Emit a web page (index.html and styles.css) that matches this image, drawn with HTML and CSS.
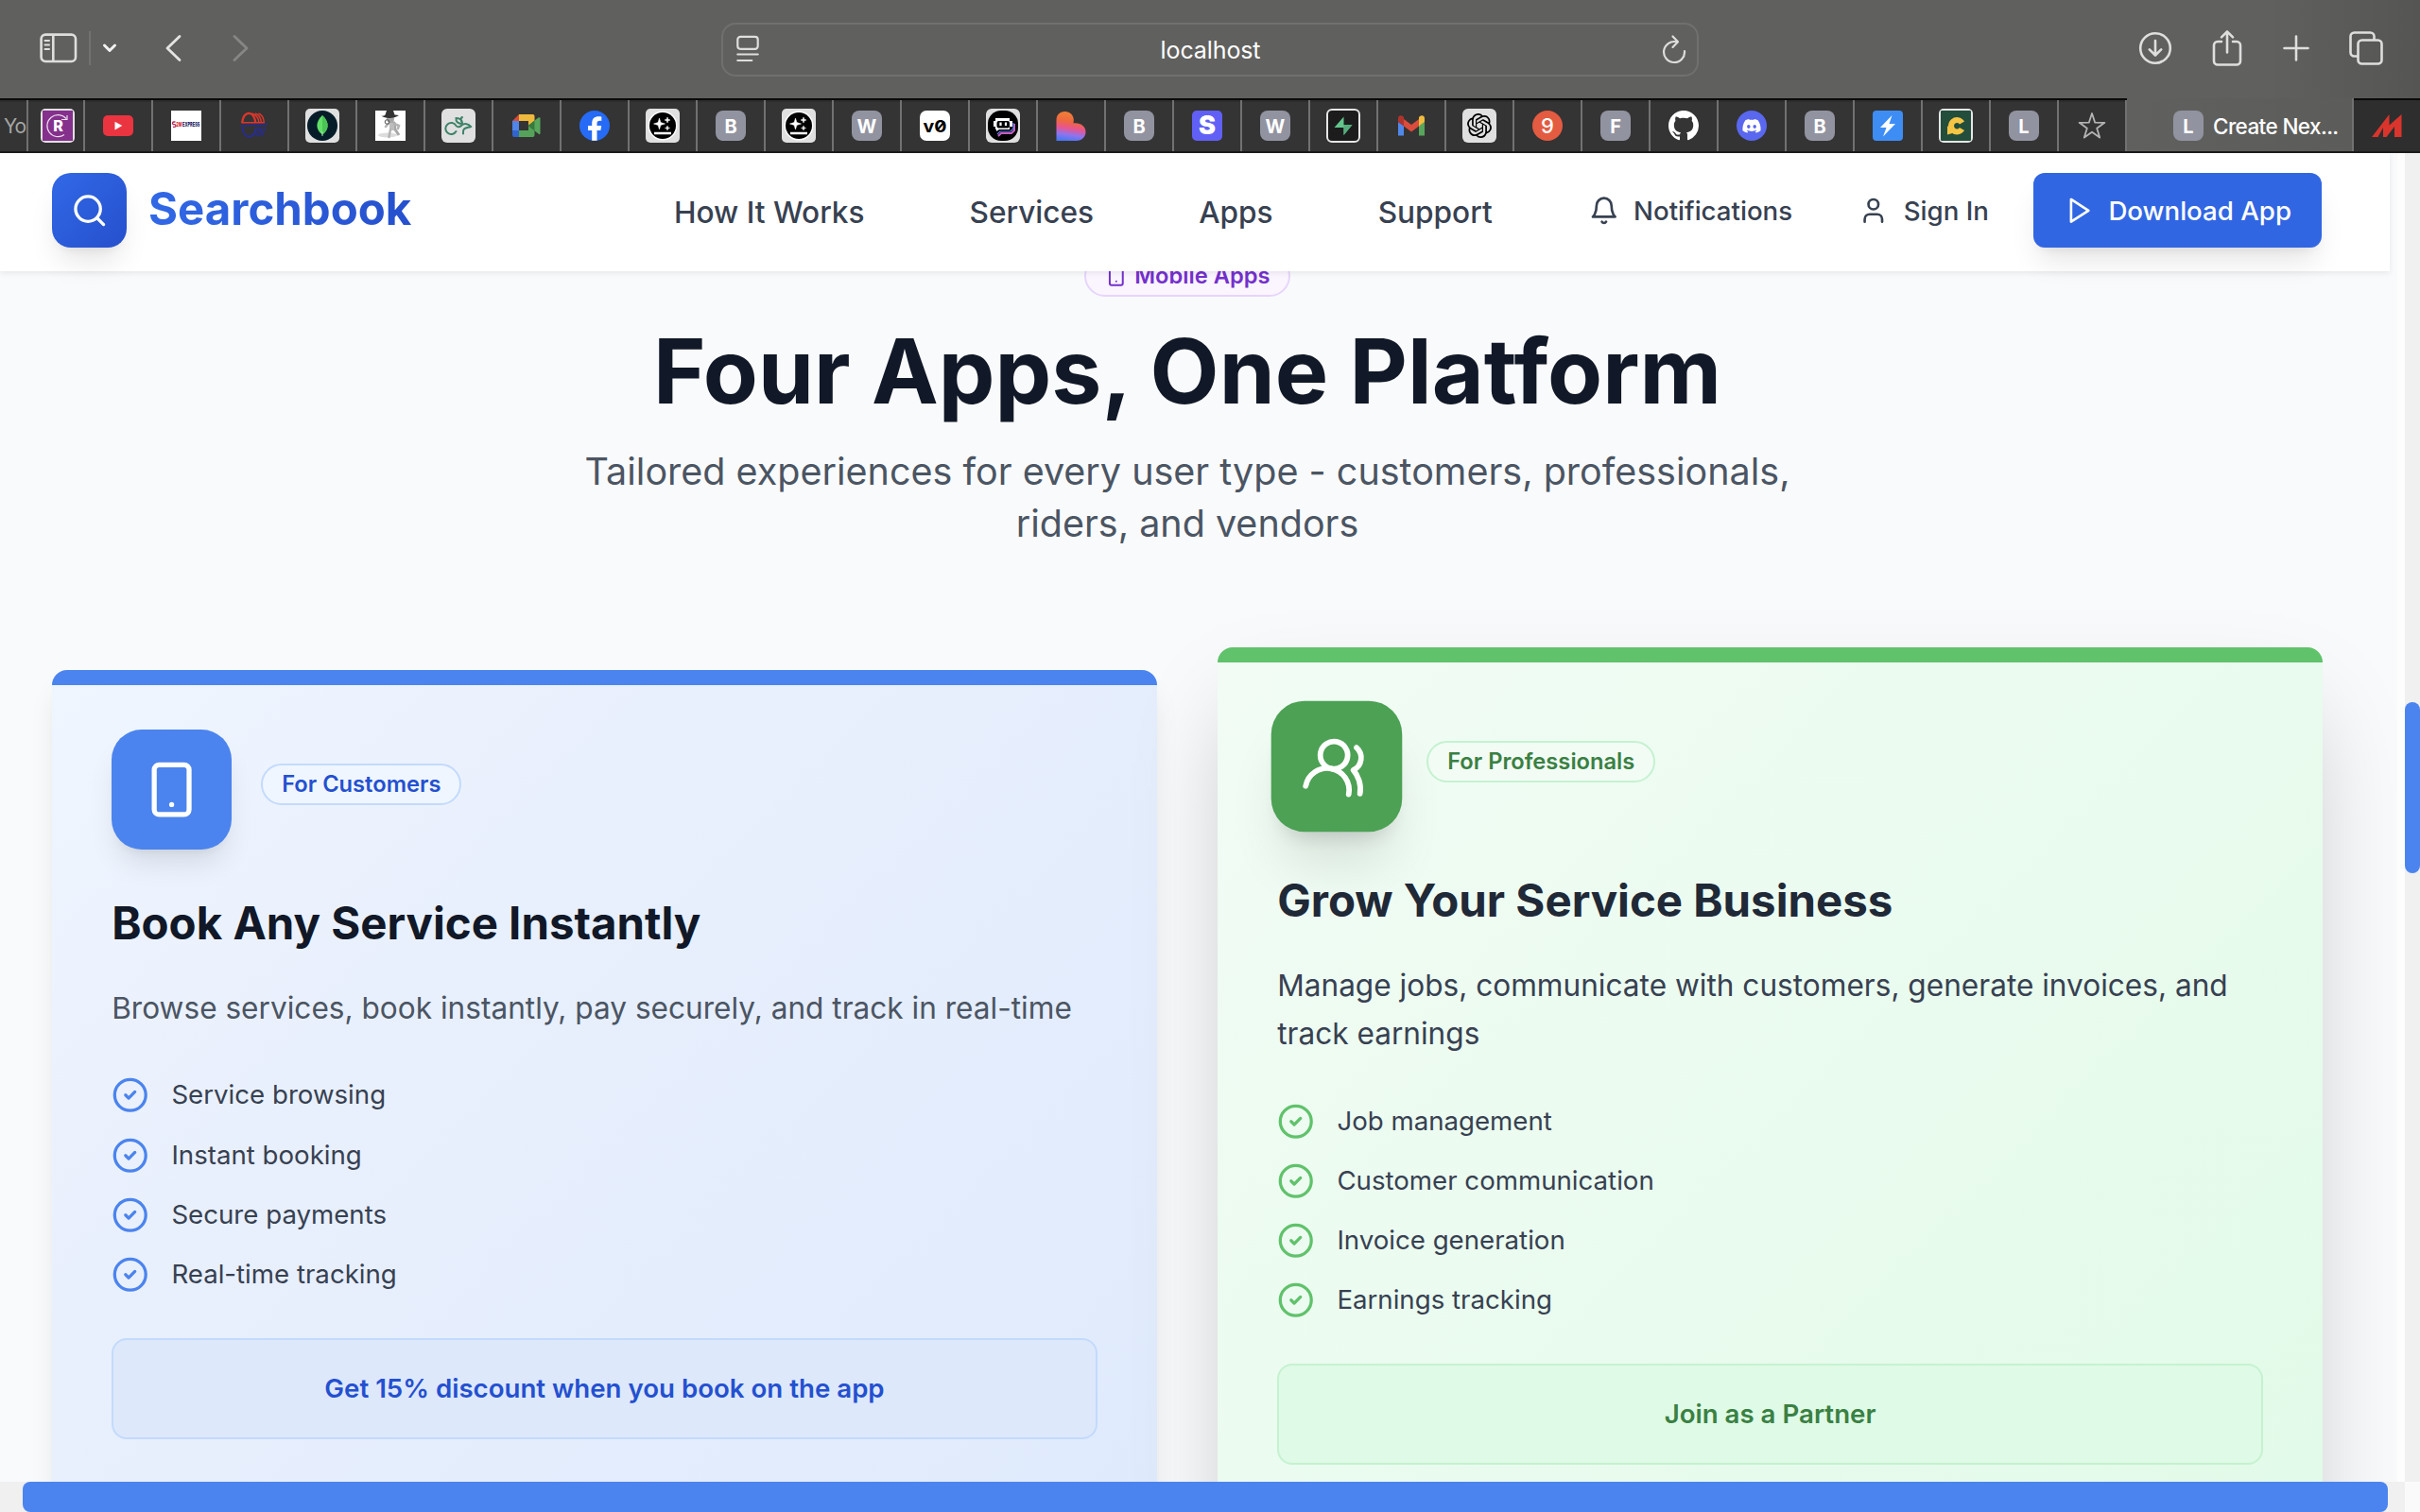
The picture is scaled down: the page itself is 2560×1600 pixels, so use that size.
FILE: index.html
```html
<!DOCTYPE html>
<html lang="en">
<head>
<meta charset="utf-8">
<title>Searchbook</title>
<link rel="stylesheet" href="styles.css">
</head>
<body>
<div class="browser">
  <div class="toolbar">
    <div class="tools tools-left">
      <svg class="i-sidebar" width="40" height="32" viewBox="0 0 40 32" fill="none" stroke="#dededd" stroke-width="2.6"><rect x="1.6" y="1.6" width="36.4" height="28.4" rx="4.5"/><path d="M14.3 2v28"/><path d="M5.5 8h4.5M5.5 12.5h4.5M5.5 17h4.5" stroke-width="2" stroke-linecap="round"/></svg>
      <span class="tool-divider"></span>
      <svg class="i-chev" width="16" height="12" viewBox="0 0 16 12" fill="none" stroke="#f2f2f2" stroke-width="3" stroke-linecap="round" stroke-linejoin="round"><path d="M2.5 3l5.5 5.5L13.500 3"/></svg>
      <svg class="i-back" width="20" height="32" viewBox="0 0 20 32" fill="none" stroke="#e4e4e3" stroke-width="2.8" stroke-linecap="round" stroke-linejoin="round"><path d="M17 3.500L4 16l13 12.500"/></svg>
      <svg class="i-fwd" width="20" height="32" viewBox="0 0 20 32" fill="none" stroke="#868685" stroke-width="2.8" stroke-linecap="round" stroke-linejoin="round"><path d="M3 3.500L16 16 3 28.500"/></svg>
    </div>
    <div class="address">
      <svg width="24" height="30" viewBox="0 0 24 30" fill="none" stroke="#dededd" stroke-width="2.2" stroke-linecap="round"><rect x="1.300" y="1.800" width="21.400" height="13" rx="3"/><path d="M1.300 20.500h21.400M1.300 27h15"/></svg>
      <span class="address-text">localhost</span>
      <svg width="26" height="32" viewBox="0 0 26 32" fill="none" stroke="#dededd" stroke-width="2.200" stroke-linecap="round" stroke-linejoin="round"><path d="M15.500 8.300A11 11 0 1 0 24 18"/><path d="M11.500 2.500l5.500 5.800-5.500 5.600"/></svg>
    </div>
    <div class="tools tools-right">
      <svg width="36" height="36" viewBox="0 0 36 36" fill="none" stroke="#dededd" stroke-width="2.600" stroke-linecap="round" stroke-linejoin="round"><circle cx="18" cy="18" r="15.800"/><path d="M18 10v15M11.800 19.300L18 25.500l6.200-6.200"/></svg>
      <svg width="32" height="40" viewBox="0 0 32 40" fill="none" stroke="#dededd" stroke-width="2.600" stroke-linecap="round" stroke-linejoin="round"><path d="M10 13H6a4 4 0 0 0-4 4v16.500a4 4 0 0 0 4 4h20a4 4 0 0 0 4-4V17a4 4 0 0 0-4-4h-4"/><path d="M16 24.500V2.500M10 8.300l6-6 6 6"/></svg>
      <svg width="28" height="28" viewBox="0 0 28 28" fill="none" stroke="#dededd" stroke-width="2.600" stroke-linecap="round"><path d="M14 1.500v25M1.500 14h25"/></svg>
      <svg width="36" height="36" viewBox="0 0 36 36" fill="none" stroke="#dededd" stroke-width="2.600" stroke-linejoin="round"><rect x="9.500" y="9.500" width="25" height="25" rx="4"/><path d="M9.500 26.500h-4a4 4 0 0 1-4-4v-17a4 4 0 0 1 4-4h17a4 4 0 0 1 4 4v4"/></svg>
    </div>
  </div>

  <div class="tabs">
    <div class="tab tab-clip">Yo</div>
    <div class="tab tab-narrow"><svg class="fav" width="36" height="36" viewBox="0 0 36 36"><rect width="36" height="36" rx="5" fill="#e0e0e0"/><rect x="2" y="2" width="32" height="32" fill="#85308c"/><path d="M25 27.500A11.500 11.500 0 1 1 27 10.500M28 7v4.500h-6" fill="none" stroke="#eadcec" stroke-width="1.200"/><text x="18.500" y="23.500" text-anchor="middle" class="t-r">R</text></svg></div>
    <div class="tab"><svg class="fav" width="32" height="32" viewBox="0 0 32 32"><rect y="5" width="32" height="22" rx="5" fill="#ea3440"/><path d="M12.500 11.800v8.600l7.800-4.300z" fill="#fff"/></svg></div>
    <div class="tab"><svg class="fav" width="32" height="32" viewBox="0 0 32 32"><rect width="32" height="32" fill="#fff"/><path d="M4.500 12H2.800a1.300 1.300 0 0 0 0 2.600h.8a1.300 1.300 0 0 1 0 2.700H2" fill="none" stroke="#b5285a" stroke-width="1.300"/><text x="5.300" y="17" class="t-ex" textLength="6" lengthAdjust="spacingAndGlyphs" fill="#d3242f">2M</text><text x="12" y="17" class="t-ex" textLength="18.500" lengthAdjust="spacingAndGlyphs" fill="#1d2260">EXPRESS</text></svg></div>
    <div class="tab"><svg class="fav" width="32" height="32" viewBox="0 0 32 32" fill="none" stroke-width="1.500"><g stroke="#dc372c"><path d="M3 13C5 0 15-1 17.500 13" stroke-width="2.200"/><path d="M13.500 3c5 1.500 7 5 7.500 10M17 3c4 1.500 6 5 6.500 10M20.500 3c4 1.500 5.500 5 5.800 10M2.500 12.700H27"/></g><g stroke="#272c96"><path d="M1.500 16.300L30 14.300"/><path d="M3.500 18c1 12 12 13.500 15-.5" stroke-width="2"/><path d="M17.500 27c2-2 3-5 3.500-9.500M20.500 27c2-2 3-5 3.300-9.500M23.500 27c2-2 3-5 3.300-9.500"/></g></svg></div>
    <div class="tab"><svg class="fav" width="36" height="36" viewBox="0 0 36 36"><rect width="36" height="36" rx="5" fill="#e0e0e0"/><circle cx="18" cy="18" r="16" fill="#061c29"/><path d="M18 7c8 7.500 7 15.500 0 20.500C11 22.500 10 14.500 18 7z" fill="#61df68"/><path d="M18 7c8 7.500 7 15.500 0 20.500z" fill="#4cc455"/><path d="M18 24v5" stroke="#a8dcb0" stroke-width="1"/></svg></div>
    <div class="tab"><svg class="fav" width="32" height="32" viewBox="0 0 32 32"><rect width="32" height="32" fill="#fff"/><ellipse cx="13" cy="26" rx="10" ry="2.500" fill="#dcdcdc"/><ellipse cx="16" cy="9" rx="4" ry="3.500" fill="#a5a5a5"/><path d="M6 5.500c2.500.5 4 0 4.500-1L12 0h7l1.500 4.500 4.500.5c-5 3.500-14 4-19 .5z" fill="#333"/><path d="M14 13h6l1 7 4 6" fill="none" stroke="#a8a8a8" stroke-width="3" stroke-linejoin="round"/><path d="M15 13h5v8h-5z" fill="#bdbdbd"/><path d="M16 20l-1.500 8M13.500 14L11 17M20 14l5 2-1 3" fill="none" stroke="#b4b4b4" stroke-width="2.500" stroke-linecap="round"/><circle cx="12.500" cy="12" r="2.300" fill="none" stroke="#555"/></svg></div>
    <div class="tab"><svg class="fav" width="36" height="36" viewBox="0 0 36 36"><rect width="36" height="36" rx="6" fill="#e0e0e0"/><path d="M15.500 24a6 6 0 1 1 0-6c1.500 2 4 1.500 6-.5 3-2.500 7-1.500 9.500 1.500-2 1-5 .5-7 2.500-1.500 1.500-1 3.500-1 5M22 16c-5 0-7-2.500-6.500-6 4 0 6.500 2 6.500 6zM21 13c-1-2 0-3.500 1-4" fill="none" stroke="#3c8268" stroke-width="2" stroke-linecap="round"/></svg></div>
    <div class="tab"><svg class="fav" width="32" height="32" viewBox="0 0 32 32"><path d="M8 4v7H1z" fill="#d94a3a"/><path d="M8 4h14.500q2 0 2 2v8L18 18v-7H8z" fill="#efb93d"/><path d="M1 11h7v10H1z" fill="#4f86e8"/><path d="M1 21h7v7H3q-2 0-2-2z" fill="#3165cc"/><path d="M8 21h10v-5l6.500 0v10q0 2-2 2H8z" fill="#55a35a"/><path d="M17.500 16l11-8.500q2-1 2 1V24q0 2-2 .5z" fill="#58a65c"/><path d="M17.500 16l7-5.500v11z" fill="#38793e"/></svg></div>
    <div class="tab"><svg class="fav" width="32" height="32" viewBox="0 0 32 32"><circle cx="16" cy="16" r="16" fill="#266bf5"/><path d="M13.200 31.800V21H9v-5h4.200v-2.200c0-5.300 2.500-7.600 7.300-7.600.9 0 2.200.2 2.800.4v4.300c-.3 0-.9-.1-1.600-.1-2.400 0-3.200 1-3.200 3.200v2h4.700l-.8 5h-3.900v10.800z" fill="#fff"/></svg></div>
    <div class="tab"><svg class="fav" width="36" height="36" viewBox="0 0 36 36"><rect width="36" height="36" rx="5" fill="#e0e0e0"/><circle cx="18" cy="18" r="15.500" fill="#fff"/><circle cx="18" cy="18" r="14" fill="#000"/><path d="M14.500 10l1.400 4.600 4.600 1.400-4.600 1.400-1.400 4.600-1.400-4.600L8.500 16l4.600-1.400zM23 9l.8 2.200 2.200.8-2.200.8L23 15l-.8-2.200L20 12l2.200-.8zM23 18l.6 1.900 1.900.6-1.900.6-.6 1.900-.6-1.900-1.900-.6 1.900-.6z" fill="#fff" stroke="#fff" stroke-width=".5"/><path d="M9 26h18" stroke="#fff" stroke-width="2.500"/></svg></div>
    <div class="tab"><span class="letter">B</span></div>
    <div class="tab"><svg class="fav" width="36" height="36" viewBox="0 0 36 36"><rect width="36" height="36" rx="5" fill="#e0e0e0"/><circle cx="18" cy="18" r="15.500" fill="#fff"/><circle cx="18" cy="18" r="14" fill="#000"/><path d="M14.500 10l1.400 4.600 4.600 1.400-4.600 1.400-1.400 4.600-1.400-4.600L8.500 16l4.600-1.400zM23 9l.8 2.200 2.200.8-2.200.8L23 15l-.8-2.200L20 12l2.200-.8zM23 18l.6 1.900 1.900.6-1.900.6-.6 1.900-.6-1.900-1.900-.6 1.900-.6z" fill="#fff" stroke="#fff" stroke-width=".5"/><path d="M9 26h18" stroke="#fff" stroke-width="2.500"/></svg></div>
    <div class="tab"><span class="letter">W</span></div>
    <div class="tab"><svg class="fav" width="32" height="32" viewBox="0 0 32 32"><rect width="32" height="32" rx="7" fill="#fff"/><text x="3.500" y="22.500" class="t-v0" textLength="25" lengthAdjust="spacingAndGlyphs">v0</text><path d="M18.500 20.500l7.500-8.500" stroke="#000" stroke-width="2"/></svg></div>
    <div class="tab"><svg class="fav" width="36" height="36" viewBox="0 0 36 36"><rect width="36" height="36" rx="6" fill="#e0e0e0"/><rect x="2" y="2" width="32" height="32" rx="14" fill="#000"/><path d="M30 16v7l-3 3H16l-3 3" fill="none" stroke="#c65cc0" stroke-width="2"/><path d="M29 15v6l-3 3H15l-3 3" fill="none" stroke="#5f7ff0" stroke-width="1.200"/><path d="M10 10h15v3h3v6h-3v3H14l-3 2v-2h-1v-3H8v-6h2z" fill="#fff"/><rect x="11.500" y="13" width="13.500" height="7.500" rx="2" fill="#000"/><path d="M15.500 14.500v3.500M21 14.500v3.500" stroke="#fff" stroke-width="2.200"/></svg></div>
    <div class="tab"><svg class="fav" width="32" height="32" viewBox="0 0 32 32"><defs><linearGradient id="hg" x1=".55" y1="0" x2=".4" y2="1"><stop offset="0" stop-color="#ef8336"/><stop offset=".35" stop-color="#ee6840"/><stop offset=".58" stop-color="#e8558f"/><stop offset=".8" stop-color="#8e74ee"/><stop offset="1" stop-color="#4a78f2"/></linearGradient></defs><path d="M0.500 32V10C.5 4 5 1 9.500 1c5.500 0 9 4 9.300 8.500 0 1.500-.1 2.700-.3 4C26 12.500 31.500 17 31.500 22.500S27 32 22 32z" fill="url(#hg)"/></svg></div>
    <div class="tab"><span class="letter">B</span></div>
    <div class="tab"><span class="letter letter-s">S</span></div>
    <div class="tab"><span class="letter">W</span></div>
    <div class="tab"><svg class="fav" width="36" height="36" viewBox="0 0 36 36"><rect x="1" y="1" width="34" height="34" rx="5" fill="#1c1c1c" stroke="#e6e6e6" stroke-width="2"/><path d="M18.500 8.500V17h9L18.500 28v-8H8.500z" fill="#63c68c"/><path d="M18.500 17h9L18.500 28z" fill="#55ad7c"/></svg></div>
    <div class="tab"><svg class="fav" width="32" height="32" viewBox="0 0 32 32"><path d="M2 12v14.500h6V16z" fill="#5088ea"/><path d="M24 16v10.500h6V12z" fill="#58a55c"/><path d="M8 9l8 6 8-6v7.500l-8 6-8-6z" fill="#da4d3c"/><path d="M2 8.500C2 5 5 4.500 7 6l1 1v9.500L2 12z" fill="#b0342b"/><path d="M30 8.500C30 5 27 4.500 25 6l-1 1v9.500L30 12z" fill="#f0bc40"/></svg></div>
    <div class="tab"><svg class="fav" width="36" height="36" viewBox="0 0 36 36"><rect width="36" height="36" rx="6" fill="#e0e0e0"/><g transform="translate(5 5) scale(1.083)"><path d="M22.2819 9.8211a5.9847 5.9847 0 0 0-.5157-4.9108 6.0462 6.0462 0 0 0-6.5098-2.9A6.0651 6.0651 0 0 0 4.9807 4.1818a5.9847 5.9847 0 0 0-3.9977 2.9 6.0462 6.0462 0 0 0 .7427 7.0966 5.98 5.98 0 0 0 .511 4.9107 6.051 6.051 0 0 0 6.5146 2.9001A5.9847 5.9847 0 0 0 13.2599 24a6.0557 6.0557 0 0 0 5.7718-4.2058 5.9894 5.9894 0 0 0 3.9977-2.9001 6.0557 6.0557 0 0 0-.7475-7.0729zm-9.022 12.6081a4.4755 4.4755 0 0 1-2.8764-1.0408l.1419-.0804 4.7783-2.7582a.7948.7948 0 0 0 .3927-.6813v-6.7369l2.02 1.1686a.071.071 0 0 1 .038.052v5.5826a4.504 4.504 0 0 1-4.4945 4.4944zm-9.6607-4.1254a4.4708 4.4708 0 0 1-.5346-3.0137l.142.0852 4.783 2.7582a.7712.7712 0 0 0 .7806 0l5.8428-3.3685v2.3324a.0804.0804 0 0 1-.0332.0615L9.74 19.9502a4.4992 4.4992 0 0 1-6.1408-1.6464zM2.3408 7.8956a4.485 4.485 0 0 1 2.3655-1.9728V11.6a.7664.7664 0 0 0 .3879.6765l5.8144 3.3543-2.0201 1.1685a.0757.0757 0 0 1-.071 0l-4.8303-2.7865A4.504 4.504 0 0 1 2.3408 7.872zm16.5963 3.8558L13.1038 8.364 15.1192 7.2a.0757.0757 0 0 1 .071 0l4.8303 2.7913a4.4944 4.4944 0 0 1-.6765 8.1042v-5.6772a.79.79 0 0 0-.407-.667zm2.0107-3.0231l-.142-.0852-4.7735-2.7818a.7759.7759 0 0 0-.7854 0L9.409 9.2297V6.8974a.0662.0662 0 0 1 .0284-.0615l4.8303-2.7866a4.4992 4.4992 0 0 1 6.6802 4.66zM8.3065 12.863l-2.02-1.1638a.0804.0804 0 0 1-.038-.0567V6.0742a4.4992 4.4992 0 0 1 7.3757-3.4537l-.142.0805L8.704 5.459a.7948.7948 0 0 0-.3927.6813zm1.0976-2.3654l2.602-1.4998 2.6069 1.4998v2.9994l-2.5974 1.4997-2.6067-1.4997Z"/></g></svg></div>
    <div class="tab"><span class="letter letter-9">9</span></div>
    <div class="tab"><span class="letter">F</span></div>
    <div class="tab"><svg class="fav" width="32" height="32" viewBox="0 0 16 16" fill="#fff"><path d="M8 0C3.580 0 0 3.580 0 8c0 3.540 2.290 6.530 5.470 7.590.4.07.55-.17.55-.38 0-.19-.01-.82-.01-1.490-2.010.37-2.530-.49-2.690-.94-.09-.23-.48-.94-.82-1.130-.28-.15-.68-.52-.01-.53.63-.01 1.080.58 1.230.82.72 1.210 1.870.87 2.330.66.07-.52.28-.87.51-1.070-1.780-.2-3.640-.89-3.640-3.950 0-.87.31-1.590.82-2.150-.08-.2-.36-1.020.08-2.120 0 0 .67-.21 2.200.82.64-.18 1.320-.27 2-.27.68 0 1.360.09 2 .27 1.530-1.040 2.200-.82 2.200-.82.44 1.100.16 1.920.08 2.120.51.56.82 1.270.82 2.150 0 3.070-1.870 3.750-3.650 3.950.29.25.54.73.54 1.480 0 1.070-.01 1.930-.01 2.200 0 .21.15.46.55.38A8.013 8.013 0 0 0 16 8c0-4.420-3.580-8-8-8z"/></svg></div>
    <div class="tab"><svg class="fav" width="32" height="32" viewBox="0 0 32 32"><circle cx="16" cy="16" r="16" fill="#5968ee"/><g transform="translate(6.400 6.700) scale(.8)" fill="#fff"><path d="M20.317 4.3698a19.7913 19.7913 0 0 0-4.8851-1.5152.0741.0741 0 0 0-.0785.0371c-.211.3753-.4447.8648-.6083 1.2495-1.8447-.2762-3.68-.2762-5.4868 0-.1636-.3933-.4058-.8742-.6177-1.2495a.077.077 0 0 0-.0785-.037 19.7363 19.7363 0 0 0-4.8852 1.515.0699.0699 0 0 0-.0321.0277C.5334 9.0458-.319 13.5799.0992 18.0578a.0824.0824 0 0 0 .0312.0561c2.0528 1.5076 4.0413 2.4228 5.9929 3.0294a.0777.0777 0 0 0 .0842-.0276c.4616-.6304.8731-1.2952 1.226-1.9942a.076.076 0 0 0-.0416-.1057c-.6528-.2476-1.2743-.5495-1.8722-.8923a.077.077 0 0 1-.0076-.1277c.1258-.0943.2517-.1923.3718-.2914a.0743.0743 0 0 1 .0776-.0105c3.9278 1.7933 8.18 1.7933 12.0614 0a.0739.0739 0 0 1 .0785.0095c.1202.099.246.1981.3728.2924a.077.077 0 0 1-.0066.1276 12.2986 12.2986 0 0 1-1.873.8914.0766.0766 0 0 0-.0407.1067c.3604.698.7719 1.3628 1.225 1.9932a.076.076 0 0 0 .0842.0286c1.961-.6067 3.9495-1.5219 6.0023-3.0294a.077.077 0 0 0 .0313-.0552c.5004-5.177-.8382-9.6739-3.5485-13.6604a.061.061 0 0 0-.0312-.0286zM8.02 15.3312c-1.1825 0-2.1569-1.0857-2.1569-2.419 0-1.3332.9555-2.4189 2.157-2.4189 1.2108 0 2.1757 1.0952 2.1568 2.419 0 1.3332-.9555 2.4189-2.1569 2.4189zm7.9748 0c-1.1825 0-2.1569-1.0857-2.1569-2.419 0-1.3332.9554-2.4189 2.1569-2.4189 1.2108 0 2.1757 1.0952 2.1568 2.419 0 1.3332-.946 2.4189-2.1568 2.4189Z"/></g></svg></div>
    <div class="tab"><span class="letter">B</span></div>
    <div class="tab"><svg class="fav" width="32" height="32" viewBox="0 0 32 32"><rect width="32" height="32" rx="4" fill="#3d8df5"/><path d="M20.500 5L8 18h6.500L11 27.500 24 14h-6.500z" fill="#fff"/></svg></div>
    <div class="tab"><svg class="fav" width="36" height="36" viewBox="0 0 36 36"><rect width="36" height="36" rx="5" fill="#e6e6e6"/><rect x="2" y="2" width="32" height="32" rx="1" fill="#234e3c"/><path d="M24.500 15A6.200 6.200 0 1 0 24.500 21.500" fill="none" stroke="#f6c545" stroke-width="6"/><path d="M9 18v9.500l7-2z" fill="#f6c545"/></svg></div>
    <div class="tab"><span class="letter">L</span></div>
    <div class="tab"><svg class="fav" width="30" height="30" viewBox="0 0 30 30" fill="none" stroke="#b4b4b4" stroke-width="1.800" stroke-linejoin="round"><path d="M15 2l3.200 9.700 10.200.1-8.200 6 3 9.800L15 21.700 6.800 27.600l3-9.800-8.200-6 10.200-.1z"/></svg></div>
    <div class="tab tab-active"><span class="letter">L</span><span class="tab-title">Create Nex...</span></div>
    <div class="tab tab-last"><svg class="fav" width="32" height="26" viewBox="0 0 32 26"><path d="M0 25L18.500 1v11.500L31.500 1v24H24V14l-8.500 11H12V15L6.500 25z" fill="#d9352c"/></svg></div>
  </div>

  <div class="viewport">
    <div class="page">
      <header class="header">
        <div class="logo">
          <span class="logo-mark"><svg viewBox="0 0 24 24" fill="none" stroke="#fff" stroke-width="2" stroke-linecap="round"><circle cx="11" cy="11" r="8"/><path d="M21 21l-4.300-4.300"/></svg></span>
          <span class="logo-name">Searchbook</span>
        </div>
        <nav class="nav"><a>How It Works</a><a>Services</a><a>Apps</a><a>Support</a></nav>
        <div class="actions">
          <a class="action"><svg viewBox="0 0 24 24" fill="none" stroke="currentColor" stroke-width="2" stroke-linecap="round" stroke-linejoin="round"><path d="M6 8a6 6 0 0 1 12 0c0 7 3 9 3 9H3s3-2 3-9"/><path d="M10.300 21a1.940 1.940 0 0 0 3.400 0"/></svg>Notifications</a>
          <a class="action action-user"><svg viewBox="0 0 24 24" fill="none" stroke="currentColor" stroke-width="2" stroke-linecap="round" stroke-linejoin="round"><path d="M19 21v-2a4 4 0 0 0-4-4H9a4 4 0 0 0-4 4v2"/><circle cx="12" cy="7" r="4"/></svg>Sign In</a>
          <a class="download"><svg viewBox="0 0 24 24" fill="none" stroke="currentColor" stroke-width="2" stroke-linecap="round" stroke-linejoin="round"><path d="M6 3l14 9-14 9z"/></svg>Download App</a>
        </div>
      </header>
      <main class="main">
        <section class="intro">
          <span class="pill"><svg viewBox="0 0 24 24" fill="none" stroke="currentColor" stroke-width="2" stroke-linecap="round" stroke-linejoin="round"><rect x="5" y="2" width="14" height="20" rx="2"/><path d="M12 18h.01"/></svg>Mobile Apps</span>
          <h2 class="title">Four Apps, One Platform</h2>
          <p class="subtitle">Tailored experiences for every user type - customers, professionals,<br>riders, and vendors</p>
        </section>
        <section class="cards">
          <article class="card card-blue">
            <div class="card-top">
              <span class="card-icon"><svg viewBox="0 0 24 24" fill="none" stroke="#fff" stroke-width="2" stroke-linecap="round" stroke-linejoin="round"><rect x="5" y="2" width="14" height="20" rx="2"/><path d="M12 18h.01"/></svg></span>
              <span class="card-badge">For Customers</span>
            </div>
            <h3 class="card-title">Book Any Service Instantly</h3>
            <p class="card-text">Browse services, book instantly, pay securely, and track in real-time</p>
            <ul class="features">
              <li><svg viewBox="0 0 24 24"><circle cx="12" cy="12" r="10"/><path d="M9 12l2 2 4-4"/></svg>Service browsing</li>
              <li><svg viewBox="0 0 24 24"><circle cx="12" cy="12" r="10"/><path d="M9 12l2 2 4-4"/></svg>Instant booking</li>
              <li><svg viewBox="0 0 24 24"><circle cx="12" cy="12" r="10"/><path d="M9 12l2 2 4-4"/></svg>Secure payments</li>
              <li><svg viewBox="0 0 24 24"><circle cx="12" cy="12" r="10"/><path d="M9 12l2 2 4-4"/></svg>Real-time tracking</li>
            </ul>
            <div class="offer">Get 15% discount when you book on the app</div>
          </article>
          <article class="card card-green">
            <div class="card-top">
              <span class="card-icon"><svg viewBox="0 0 24 24" fill="none" stroke="#fff" stroke-width="2" stroke-linecap="round" stroke-linejoin="round"><path d="M18 21a8 8 0 0 0-16 0"/><circle cx="10" cy="8" r="5"/><path d="M22 20c0-3.370-2-6.500-4-8a5 5 0 0 0-.45-8.300"/></svg></span>
              <span class="card-badge">For Professionals</span>
            </div>
            <h3 class="card-title">Grow Your Service Business</h3>
            <p class="card-text">Manage jobs, communicate with customers, generate invoices, and track earnings</p>
            <ul class="features">
              <li><svg viewBox="0 0 24 24"><circle cx="12" cy="12" r="10"/><path d="M9 12l2 2 4-4"/></svg>Job management</li>
              <li><svg viewBox="0 0 24 24"><circle cx="12" cy="12" r="10"/><path d="M9 12l2 2 4-4"/></svg>Customer communication</li>
              <li><svg viewBox="0 0 24 24"><circle cx="12" cy="12" r="10"/><path d="M9 12l2 2 4-4"/></svg>Invoice generation</li>
              <li><svg viewBox="0 0 24 24"><circle cx="12" cy="12" r="10"/><path d="M9 12l2 2 4-4"/></svg>Earnings tracking</li>
            </ul>
            <div class="offer">Join as a Partner</div>
          </article>
        </section>
      </main>
    </div>
    <div class="scroll-y"><span class="thumb-y"></span></div>
    <div class="scroll-x"><span class="thumb-x"></span></div>
    <div class="corner"></div>
  </div>
</div>
</body>
</html>
```
FILE: styles.css
```css
* { box-sizing: border-box; margin: 0; padding: 0; }
html { font-size: 31.6px; }
body { width: 2560px; height: 1600px; overflow: hidden; font-family: Inter, "Liberation Sans", sans-serif; }
svg { display: block; flex: none; }

.browser { height: 1600px; display: flex; flex-direction: column; }

/* window toolbar */
.toolbar { height: 104px; flex: none; display: flex; align-items: center; justify-content: space-between; background: linear-gradient(90deg, #60605e 0, #60605e 2400px, #555553 2560px); }
.tools { display: flex; align-items: center; }
.tools-left { width: 763px; padding-left: 42px; padding-bottom: 3px; }
.tool-divider { width: 2px; height: 36px; margin-left: 12px; background: #727271; }
.i-chev { margin-left: 12px; }
.i-back { margin-left: 49px; }
.i-fwd { margin-left: 52px; }
.address { width: 1034px; height: 57px; display: flex; align-items: center; justify-content: space-between; padding: 0 11px 0 14px; border: 2px solid #70706f; border-radius: 15px; }
.address-text { padding-top: 2px; font-size: 25px; color: #fff; letter-spacing: -.1px; }
.tools-right { width: 763px; justify-content: flex-end; gap: 42.5px; padding-right: 39px; padding-bottom: 3px; }

/* tab strip */
.tabs { height: 58px; flex: none; display: flex; background: #343434; border-top: 2px solid #0a0a0a; border-bottom: 2px solid #1b1b1b; box-shadow: inset 0 2px 0 rgba(0,0,0,.12); }
.tab { flex: none; width: 72px; height: 54px; display: flex; align-items: center; justify-content: center; border-right: 2px solid #717171; }
.tab-clip { width: 30px; justify-content: flex-start; padding-left: 4px; font-size: 21px; letter-spacing: -1.2px; color: #a5a5a5; }
.tab-narrow { width: 60px; padding-left: 4px; }
.tab-active { width: 240px; gap: 10px; justify-content: flex-start; padding-left: 49px; margin-top: -2px; height: 56px; padding-top: 2px; background: linear-gradient(90deg, #60605e, #5c5c5a); }
.tab-title { font-size: 22.5px; font-weight: 500; color: #fff; letter-spacing: -.6px; }
.tab-last { width: 70px; border-right: 0; background: #2e2e2e; }
.letter { width: 32px; height: 32px; border-radius: 8px; background: #9293a0; color: #fff; font-size: 20px; font-weight: 700; line-height: 34px; text-align: center; }
.letter-s { background: #6160f6; border-radius: 5px; font-size: 27px; font-weight: 900; line-height: 32px; }
.letter-9 { background: #e35b41; border-radius: 50%; font-size: 22px; font-weight: 500; line-height: 32px; }
.t-r { font: 800 16px Inter, sans-serif; fill: #fff; }
.t-ex { font: 800 6.5px Inter, sans-serif; }
.t-v0 { font: 700 17.5px Inter, sans-serif; fill: #000; }

/* page frame and scrollbars */
.viewport { height: 1438px; display: grid; grid-template-columns: 2544px 16px; grid-template-rows: 1406px 32px; }
.page { overflow: hidden; background: #f9fafb; border-right: 8px solid #fdfdfd; }
.scroll-y { background: #f0f0f0; padding-top: 581px; }
.thumb-y { display: block; height: 181px; border-radius: 8px; background: #4b84ee; }
.scroll-x { background: #f0f0f0; padding: 0 18px 0 24px; }
.thumb-x { display: block; height: 32px; border-radius: 8px; background: #4b84ee; }
.corner { background: #fafafa; }

/* site header */
.header { position: relative; z-index: 1; width: 2528px; height: 125px; padding: 0 72px 4px 55px; display: flex; align-items: center; background: #fff; box-shadow: 0 2px 6px rgba(0,0,0,.08); color: #374151; }
.logo { display: flex; align-items: center; gap: 23px; width: 658px; }
.logo-mark { width: 2.5rem; height: 2.5rem; display: grid; place-items: center; border-radius: 20px; background: linear-gradient(135deg, #3168e6, #2650cd); box-shadow: 0 20px 30px -6px rgba(0,0,0,.1), 0 8px 12px -8px rgba(0,0,0,.1); }
.logo-mark svg { width: 1.25rem; height: 1.25rem; }
.logo-name { margin-bottom: 4px; font-size: 1.5rem; line-height: 2rem; font-weight: 700; background: linear-gradient(90deg, #3168e6, #2650cd); background-clip: text; -webkit-background-clip: text; color: transparent; }
.nav { display: flex; gap: 111px; font-size: 1rem; font-weight: 500; padding-top: 3px; }
.actions { margin-left: auto; display: flex; align-items: center; font-size: .875rem; font-weight: 500; }
.action { display: flex; align-items: center; gap: 16px; padding-top: 1px; }
.action svg { width: 1rem; height: 1rem; }
.action-user { margin-left: 70px; }
.download { display: flex; align-items: center; gap: 16px; height: 2.53rem; margin-left: 47px; padding: 1px 32px 0; border-radius: 12px; background: #3166e3; color: #fff; box-shadow: 0 20px 30px -6px rgba(0,0,0,.1), 0 8px 12px -8px rgba(0,0,0,.1); }
.download svg { width: 1rem; height: 1rem; }

/* section heading */
.main { width: 2402px; margin: -17px 0 0 55px; }
.intro { display: flex; flex-direction: column; align-items: center; text-align: center; }
.pill { display: flex; align-items: center; gap: 8px; height: 44px; padding: 0 20px; border: 2px solid #e6d5fc; border-radius: 22px; background: #faf5ff; color: #7430cc; font-size: .75rem; line-height: 1; font-weight: 600; }
.pill svg { width: .75rem; height: .75rem; }
.title { margin-top: 1rem; font-size: 3rem; line-height: 1; font-weight: 700; color: #111827; }
.subtitle { margin-top: 1rem; font-size: 1.25rem; line-height: 1.75rem; color: #4b5563; }

/* app cards */
.cards { display: grid; grid-template-columns: 1fr 1fr; gap: 64px; margin-top: 4rem; }
.card { height: 1150px; padding: 2rem; border-radius: 16px; overflow: hidden; }
.card::before { content: ""; display: block; height: 16px; margin: -2rem -2rem calc(2rem - 16px); }
.card-blue { background: linear-gradient(135deg, #eff6ff, #e9f0fd 30%, #dde9fc); box-shadow: 0 20px 30px -6px rgba(0,0,0,.1), 0 8px 12px -8px rgba(0,0,0,.1); }
.card-blue::before { background: #4b84ee; }
.card-green { margin-top: -24px; background: linear-gradient(135deg, #f2fcf5, #e0fae7); box-shadow: 0 50px 100px -24px rgba(0,0,0,.25); }
.card-green::before { background: #60c26b; }
.card-top { display: flex; align-items: flex-start; gap: 1rem; }
.card-icon { width: 4rem; height: 4rem; display: grid; place-items: center; border-radius: 32px; background: #4b84ee; box-shadow: 0 20px 30px -6px rgba(0,0,0,.1), 0 8px 12px -8px rgba(0,0,0,.1); }
.card-icon svg { width: 2rem; height: 2rem; }
.card-green .card-icon { background: #4ca154; transform: scale(1.1); box-shadow: 0 40px 50px -10px rgba(0,0,0,.1), 0 16px 20px -12px rgba(0,0,0,.15); }
.card-green .card-icon svg { transform: rotate(11deg); }
.card-badge { margin-top: 36px; height: 44px; padding: 0 20px; border: 2px solid #c3dafc; border-radius: 22px; background: #eff6ff; color: #2450d0; font-size: .75rem; font-weight: 600; line-height: 39px; }
.card-green .card-badge { border-color: #c5f2d0; background: #f2fcf5; color: #3a8043; }
.card-title { margin-top: calc(1.5rem - 1px); font-size: 1.5rem; line-height: 2rem; font-weight: 700; color: #111827; }
.card-green .card-title { color: #1f2937; }
.card-text { margin-top: calc(1rem + 1px); font-size: 1rem; line-height: 1.625; color: #4b5563; }
.card-green .card-text { color: #374151; }
.features { list-style: none; margin-top: 1.5rem; display: flex; flex-direction: column; gap: .75rem; }
.features li { display: flex; align-items: center; gap: .75rem; font-size: .875rem; line-height: 1.25rem; color: #374151; }
.features svg { width: 1.25rem; height: 1.25rem; fill: none; stroke: #4b84ee; stroke-width: 2; stroke-linecap: round; stroke-linejoin: round; }
.card-green .features svg { stroke: #60c26b; }
.offer { margin-top: 1.5rem; padding: 1rem; border: 2px solid #c3dafc; border-radius: 16px; background: #dde8fb; color: #2450d0; font-size: .875rem; line-height: 1.25rem; font-weight: 600; text-align: center; }
.card-green .offer { border-color: #c5f2d0; background: #dffae6; color: #3a8043; }
```
